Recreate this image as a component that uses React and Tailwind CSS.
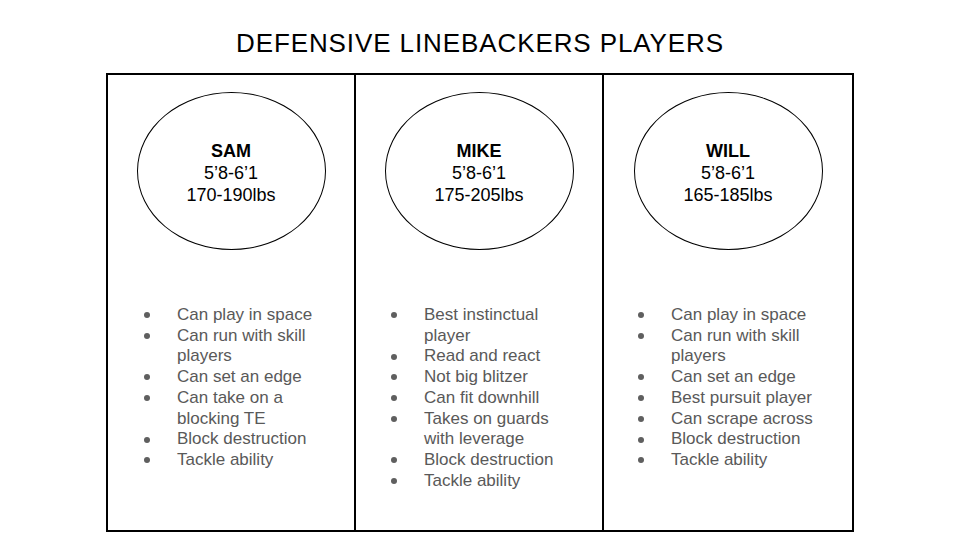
const players = [
  {
    name: 'SAM',
    height: '5’8-6’1',
    weight: '170-190lbs',
    pad: 'pl-[36px]',
    traits: ['Can play in space', 'Can run with skill players', 'Can set an edge', 'Can take on a blocking TE', 'Block destruction', 'Tackle ability'],
  },
  {
    name: 'MIKE',
    height: '5’8-6’1',
    weight: '175-205lbs',
    pad: 'pl-[35px]',
    traits: ['Best instinctual player', 'Read and react', 'Not big blitzer', 'Can fit downhill', 'Takes on guards with leverage', 'Block destruction', 'Tackle ability'],
  },
  {
    name: 'WILL',
    height: '5’8-6’1',
    weight: '165-185lbs',
    pad: 'pl-[34px]',
    traits: ['Can play in space', 'Can run with skill players', 'Can set an edge', 'Best pursuit player', 'Can scrape across', 'Block destruction', 'Tackle ability'],
  },
]

const PlayerColumn = ({ player }) => {
  return (
    <div className="flex flex-col items-stretch pt-[17px]">
      {/* Ellipse with name and size */}
      <div className="self-center w-[189px] h-[158px] rounded-[50%] border border-black flex flex-col items-center justify-center pt-[4px] text-[18px] leading-[22px] text-black">
        <span className="font-bold">{player.name}</span>
        <span>{player.height}</span>
        <span>{player.weight}</span>
      </div>

      {/* Traits */}
      <ul className={`mt-[55px] ${player.pad} text-[17px] leading-[20.7px] text-[#595959]`}>
        {player.traits.map((t) => (
          <li key={t} className="flex">
            <span className="w-[33px] h-[20.7px] shrink-0 flex items-center">
              <span className="size-[6px] rounded-full bg-[#5f5f5f]" />
            </span>
            <span className="w-[150px]">{t}</span>
          </li>
        ))}
      </ul>
    </div>
  )
}

export default function App() {
  return (
    <div className="w-[960px] h-[540px] bg-white flex flex-col items-center" style={{ fontFamily: '"Liberation Sans", Arial, sans-serif' }}>
      <div className="h-[73px] pt-[30px] flex justify-center">
        <h1 className="text-[26px] leading-none tracking-[0.9px] text-black">DEFENSIVE LINEBACKERS PLAYERS</h1>
      </div>
      <div className="w-[748px] h-[459px] border-2 border-black grid grid-cols-3 divide-x-2 divide-black">
        {players.map((p) => (
          <PlayerColumn key={p.name} player={p} />
        ))}
      </div>
    </div>
  )
}
